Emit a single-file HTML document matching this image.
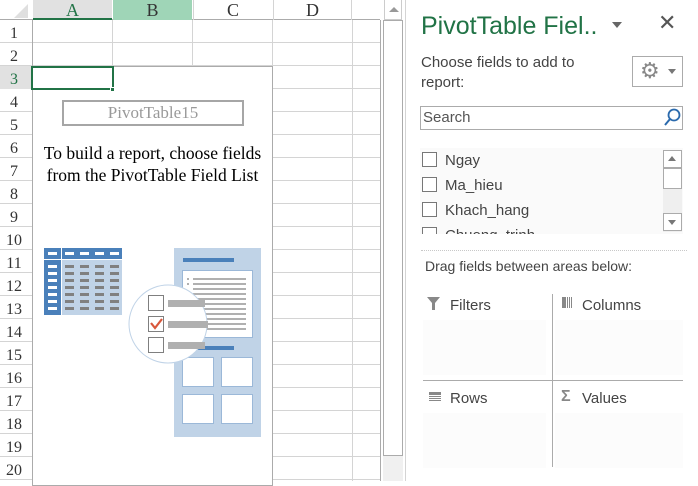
<!DOCTYPE html>
<html><head><style>
*{margin:0;padding:0;box-sizing:border-box}
body{width:698px;height:481px;overflow:hidden;background:#fff;position:relative;font-family:"Liberation Sans",sans-serif}
.a{position:absolute}
.ser{font-family:"Liberation Serif",serif}
</style></head><body>
<div class="a" style="left:0;top:0;width:380px;height:20px;background:#fff;border-bottom:1px solid #ababab"></div>
<div class="a" style="left:14px;top:4px;width:0;height:0;border-left:14px solid transparent;border-bottom:14px solid #dfdfdf"></div>
<div class="a ser" style="left:33px;top:0;width:79px;height:20px;background:#e1e1e1;border-bottom:2px solid #217346;color:#217346;text-align:center;font-size:18px;line-height:20px">A</div>
<div class="a ser" style="left:113px;top:0;width:79px;height:20px;background:#9fd5b7;color:#333;text-align:center;font-size:18px;line-height:20px">B</div>
<div class="a ser" style="left:193px;top:0;width:79px;height:20px;color:#333;text-align:center;font-size:18px;line-height:20px;border-left:1px solid #d4d4d4">C</div>
<div class="a ser" style="left:273px;top:0;width:79px;height:20px;color:#333;text-align:center;font-size:18px;line-height:20px;border-left:1px solid #d4d4d4;border-right:1px solid #d4d4d4">D</div>
<svg class="a" style="left:0;top:20px" width="381" height="461">
<g stroke="#d4d4d4" stroke-width="1">
<line x1="112.5" y1="0" x2="112.5" y2="461"/><line x1="192.5" y1="0" x2="192.5" y2="461"/><line x1="272.5" y1="0" x2="272.5" y2="461"/><line x1="352.5" y1="0" x2="352.5" y2="461"/>
</g>
<g stroke="#d4d4d4">
<line x1="0" y1="22.5" x2="380" y2="22.5"/><line x1="0" y1="45.5" x2="380" y2="45.5"/><line x1="0" y1="68.5" x2="380" y2="68.5"/><line x1="0" y1="91.5" x2="380" y2="91.5"/><line x1="0" y1="114.5" x2="380" y2="114.5"/><line x1="0" y1="137.5" x2="380" y2="137.5"/><line x1="0" y1="160.5" x2="380" y2="160.5"/><line x1="0" y1="183.5" x2="380" y2="183.5"/><line x1="0" y1="206.5" x2="380" y2="206.5"/><line x1="0" y1="229.5" x2="380" y2="229.5"/><line x1="0" y1="252.5" x2="380" y2="252.5"/><line x1="0" y1="275.5" x2="380" y2="275.5"/><line x1="0" y1="298.5" x2="380" y2="298.5"/><line x1="0" y1="321.5" x2="380" y2="321.5"/><line x1="0" y1="344.5" x2="380" y2="344.5"/><line x1="0" y1="367.5" x2="380" y2="367.5"/><line x1="0" y1="390.5" x2="380" y2="390.5"/><line x1="0" y1="413.5" x2="380" y2="413.5"/><line x1="0" y1="436.5" x2="380" y2="436.5"/><line x1="0" y1="459.5" x2="380" y2="459.5"/>
</g>
<rect x="0" y="46" width="32" height="23" fill="#e1e1e1"/>
<line x1="32.5" y1="0" x2="32.5" y2="461" stroke="#ababab"/>
<line x1="380.5" y1="0" x2="380.5" y2="461" stroke="#ababab"/>
<g font-family="Liberation Serif" font-size="16" fill="#333" text-anchor="middle">
<text x="14" y="18">1</text><text x="14" y="41">2</text><text x="14" y="64" fill="#217346">3</text><text x="14" y="87">4</text><text x="14" y="110">5</text><text x="14" y="133">6</text><text x="14" y="156">7</text><text x="14" y="179">8</text><text x="14" y="202">9</text><text x="14" y="225">10</text><text x="14" y="248">11</text><text x="14" y="271">12</text><text x="14" y="294">13</text><text x="14" y="317">14</text><text x="14" y="340">15</text><text x="14" y="363">16</text><text x="14" y="386">17</text><text x="14" y="409">18</text><text x="14" y="432">19</text><text x="14" y="455">20</text>
</g>
</svg>
<div class="a" style="left:32px;top:66px;width:241px;height:420px;background:#fff;border:1px solid #ababab"></div>
<div class="a" style="left:31px;top:66px;width:83px;height:24px;border:2px solid #217346"></div>
<div class="a" style="left:110px;top:87px;width:5px;height:5px;background:#217346;border:1px solid #fff"></div>
<div class="a ser" style="left:62px;top:100px;width:182px;height:26px;border:2px solid #a6a6a6;color:#999;font-size:17px;text-align:center;line-height:22px">PivotTable15</div>
<div class="a ser" style="left:33px;top:142px;width:239px;text-align:center;font-size:17.5px;line-height:22px;color:#000;white-space:nowrap">To build a report, choose fields<br>from the PivotTable Field List</div>
<svg class="a" style="left:30px;top:230px" width="250" height="250">
<rect x="14" y="18" width="78" height="67" fill="#c0d3e7"/>
<rect x="14" y="18" width="17" height="67" fill="#4a80ba"/>
<rect x="14" y="18" width="78" height="11" fill="#4a80ba"/>
<line x1="31.5" y1="18" x2="31.5" y2="85" stroke="#fff"/><line x1="14" y1="29.5" x2="92" y2="29.5" stroke="#fff"/>
<g fill="#fff"><rect x="18" y="22" width="9" height="3"/><rect x="35" y="22" width="9" height="3"/><rect x="50" y="22" width="9" height="3"/><rect x="65" y="22" width="9" height="3"/><rect x="80" y="22" width="9" height="3"/>
<rect x="18" y="35" width="9" height="3"/><rect x="18" y="42" width="9" height="3"/><rect x="18" y="49" width="9" height="3"/><rect x="18" y="56" width="9" height="3"/><rect x="18" y="63" width="9" height="3"/><rect x="18" y="70" width="9" height="3"/><rect x="18" y="77" width="9" height="3"/></g>
<g fill="#808080">
<rect x="35" y="35" width="9" height="3"/><rect x="50" y="35" width="9" height="3"/><rect x="65" y="35" width="9" height="3"/><rect x="80" y="35" width="9" height="3"/>
<rect x="35" y="42" width="9" height="3"/><rect x="50" y="42" width="9" height="3"/><rect x="65" y="42" width="9" height="3"/><rect x="80" y="42" width="9" height="3"/>
<rect x="35" y="49" width="9" height="3"/><rect x="50" y="49" width="9" height="3"/><rect x="65" y="49" width="9" height="3"/><rect x="80" y="49" width="9" height="3"/>
<rect x="35" y="56" width="9" height="3"/><rect x="50" y="56" width="9" height="3"/><rect x="65" y="56" width="9" height="3"/><rect x="80" y="56" width="9" height="3"/>
<rect x="35" y="63" width="9" height="3"/><rect x="50" y="63" width="9" height="3"/><rect x="65" y="63" width="9" height="3"/><rect x="80" y="63" width="9" height="3"/>
<rect x="35" y="70" width="9" height="3"/><rect x="50" y="70" width="9" height="3"/><rect x="65" y="70" width="9" height="3"/><rect x="80" y="70" width="9" height="3"/>
<rect x="35" y="77" width="9" height="3"/><rect x="50" y="77" width="9" height="3"/><rect x="65" y="77" width="9" height="3"/><rect x="80" y="77" width="9" height="3"/></g>
<rect x="144" y="18" width="87" height="189" fill="#c0d3e7"/>
<rect x="153" y="28" width="51" height="4" fill="#4a80ba"/>
<rect x="152.5" y="40.5" width="70" height="67" fill="#fff" stroke="#9bb8d8"/>
<g fill="#b0b0b0"><rect x="157" y="48" width="2" height="2"/><rect x="157" y="53" width="2" height="2"/>
<rect x="163" y="48" width="53" height="2"/><rect x="163" y="53" width="53" height="2"/><rect x="163" y="58" width="53" height="2"/><rect x="163" y="63" width="53" height="2"/><rect x="163" y="68" width="53" height="2"/><rect x="163" y="73" width="53" height="2"/><rect x="163" y="78" width="53" height="2"/><rect x="163" y="83" width="53" height="2"/><rect x="163" y="88" width="53" height="2"/><rect x="163" y="93" width="53" height="2"/><rect x="163" y="98" width="53" height="2"/></g>
<rect x="153" y="116" width="51" height="4" fill="#4a80ba"/>
<g fill="#fff" stroke="#9bb8d8"><rect x="152.5" y="127.5" width="31" height="29"/><rect x="191.5" y="127.5" width="31" height="29"/><rect x="152.5" y="164.5" width="31" height="29"/><rect x="191.5" y="164.5" width="31" height="29"/></g>
<circle cx="138" cy="94" r="39" fill="#fff" stroke="#c0d3e7"/>
<g fill="#fff" stroke="#7f7f7f" stroke-width="1"><rect x="118.5" y="65.5" width="15" height="15"/><rect x="118.5" y="86.5" width="15" height="15"/><rect x="118.5" y="107.5" width="15" height="15"/></g>
<path d="M121 93 L125 98 L132 89" stroke="#d9573b" stroke-width="2.2" fill="none"/>
<g fill="#b0b0b0"><rect x="138" y="70" width="37" height="7"/><rect x="138" y="91" width="40" height="7"/><rect x="138" y="112" width="37" height="7"/></g>
</svg>
<div class="a" style="left:383px;top:0;width:20px;height:481px;background:#fff"></div>
<div class="a" style="left:384px;top:0;width:18px;height:20px;border:1px solid #ccc;border-top:none;background:#fff"></div>
<div class="a" style="left:389px;top:7px;width:0;height:0;border-left:5px solid transparent;border-right:5px solid transparent;border-bottom:5px solid #999"></div>
<div class="a" style="left:383px;top:20px;width:20px;height:436px;border:1px solid #ababab"></div>
<div class="a" style="left:383px;top:456px;width:20px;height:25px;background:#f0f0f0"></div>
<div class="a" style="left:405px;top:0;width:1px;height:481px;background:#d4d4d4"></div>
<div class="a" style="left:421px;top:12px;font-size:25px;color:#217346;white-space:nowrap">PivotTable Fiel..</div>
<div class="a" style="left:612px;top:22px;width:0;height:0;border-left:5px solid transparent;border-right:5px solid transparent;border-top:6px solid #666"></div>
<div class="a" style="left:658px;top:10px;font-size:22px;color:#555">✕</div>
<div class="a" style="left:421px;top:53px;font-size:15px;line-height:20px;color:#444">Choose fields to add to<br>report:</div>
<div class="a" style="left:632px;top:56px;width:51px;height:31px;border:1px solid #ababab;background:#fff"></div>
<div class="a" style="left:640px;top:58px;font-size:22px;color:#888">⚙</div>
<div class="a" style="left:668px;top:69px;width:0;height:0;border-left:4px solid transparent;border-right:4px solid transparent;border-top:5px solid #777"></div>
<div class="a" style="left:420px;top:106px;width:263px;height:24px;border:1px solid #ababab;font-size:15px;color:#555;padding-left:2px;line-height:22px">Search</div>
<svg class="a" style="left:662px;top:107px" width="20" height="20"><circle cx="12" cy="8" r="5.5" fill="none" stroke="#2a6aad" stroke-width="1.8"/><line x1="8" y1="12" x2="3" y2="18" stroke="#2a6aad" stroke-width="2"/></svg>
<div class="a" style="left:420px;top:148px;width:263px;height:86px;background:#fafafa;overflow:hidden">
<div style="position:absolute;left:2px;top:0px;font-size:15px;line-height:25px;color:#444">
<div><span style="display:inline-block;width:15px;height:15px;border:1px solid #777;vertical-align:-2px;margin-right:8px;background:#fff"></span>Ngay</div>
<div><span style="display:inline-block;width:15px;height:15px;border:1px solid #777;vertical-align:-2px;margin-right:8px;background:#fff"></span>Ma_hieu</div>
<div><span style="display:inline-block;width:15px;height:15px;border:1px solid #777;vertical-align:-2px;margin-right:8px;background:#fff"></span>Khach_hang</div>
<div><span style="display:inline-block;width:15px;height:15px;border:1px solid #777;vertical-align:-2px;margin-right:8px;background:#fff"></span>Chuong_trinh</div>
</div>
<div style="position:absolute;left:243px;top:2px;width:19px;height:82px;background:#efefef"></div>
<div style="position:absolute;left:243px;top:2px;width:19px;height:18px;border:1px solid #ababab;background:#fff"></div>
<div style="position:absolute;left:248px;top:8px;border-left:4px solid transparent;border-right:4px solid transparent;border-bottom:5px solid #777"></div>
<div style="position:absolute;left:243px;top:20px;width:19px;height:21px;border:1px solid #ababab;background:#fff"></div>
<div style="position:absolute;left:243px;top:65px;width:19px;height:18px;border:1px solid #ababab;background:#fff"></div>
<div style="position:absolute;left:248px;top:72px;border-left:4px solid transparent;border-right:4px solid transparent;border-top:5px solid #777"></div>
</div>
<div class="a" style="left:421px;top:250px;width:266px;border-top:1px dotted #c8c8c8"></div>
<div class="a" style="left:425px;top:258px;font-size:14px;color:#444">Drag fields between areas below:</div>
<div class="a" style="left:423px;top:320px;width:123px;height:55px;background:#fcfcfc"></div>
<div class="a" style="left:555px;top:320px;width:128px;height:55px;background:#fcfcfc"></div>
<div class="a" style="left:423px;top:413px;width:123px;height:55px;background:#fcfcfc"></div>
<div class="a" style="left:555px;top:413px;width:128px;height:55px;background:#fcfcfc"></div>
<div class="a" style="left:552px;top:294px;width:1px;height:173px;background:#ababab"></div>
<div class="a" style="left:423px;top:380px;width:260px;height:1px;background:#ababab"></div>
<svg class="a" style="left:427px;top:297px" width="14" height="14"><path d="M0 0H13L8 6V13H5V6Z" fill="#888"/></svg>
<div class="a" style="left:450px;top:297px;font-size:15px;color:#444">Filters</div>
<svg class="a" style="left:562px;top:297px" width="14" height="12"><rect x="0" y="0" width="4" height="11" fill="#888"/><g stroke="#888"><line x1="5.5" y1="0" x2="5.5" y2="11"/><line x1="7.5" y1="0" x2="7.5" y2="11"/><line x1="9.5" y1="0" x2="9.5" y2="11"/></g></svg>
<div class="a" style="left:582px;top:297px;font-size:15px;color:#444">Columns</div>
<svg class="a" style="left:429px;top:392px" width="14" height="12"><rect x="0" y="0" width="12" height="3" fill="#888"/><g stroke="#888"><line x1="0" y1="4.5" x2="12" y2="4.5"/><line x1="0" y1="6.5" x2="12" y2="6.5"/><line x1="0" y1="8.5" x2="12" y2="8.5"/></g></svg>
<div class="a" style="left:450px;top:390px;font-size:15px;color:#444">Rows</div>
<div class="a" style="left:561px;top:388px;font-size:16px;font-weight:bold;color:#888">Σ</div>
<div class="a" style="left:582px;top:390px;font-size:15px;color:#444">Values</div>
</body></html>
